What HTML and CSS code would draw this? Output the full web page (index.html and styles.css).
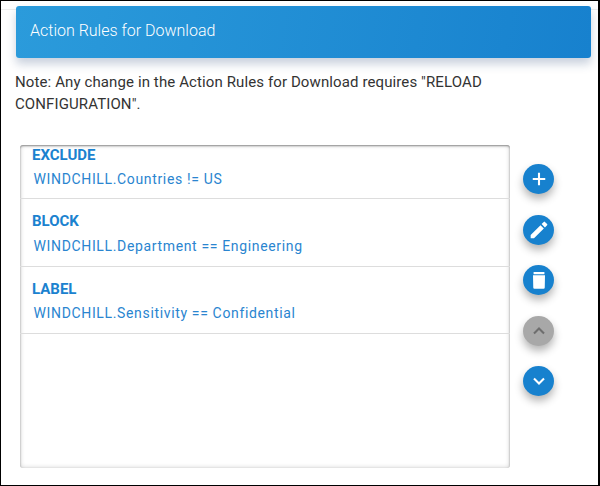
FILE: index.html
```html
<!DOCTYPE html>
<html lang="en">
<head>
  <meta charset="UTF-8">
  <title>Action Rules for Download</title>
  <link rel="stylesheet" href="styles.css">
</head>
<body>

<div class="frame">
  <div class="page-header">Action Rules for Download</div>
  <p class="note">Note: Any change in the Action Rules for Download requires "RELOAD CONFIGURATION".</p>

  <div class="rules-area">
    <div class="rule-list">
      <div class="rule rule-first">
        <div class="rule-type">EXCLUDE</div>
        <div class="rule-text">WINDCHILL.Countries != US</div>
      </div>
      <div class="rule rule-second">
        <div class="rule-type">BLOCK</div>
        <div class="rule-text">WINDCHILL.Department == Engineering</div>
      </div>
      <div class="rule">
        <div class="rule-type">LABEL</div>
        <div class="rule-text">WINDCHILL.Sensitivity == Confidential</div>
      </div>
    </div>

    <div class="actions">
      <button class="fab" aria-label="Add">
        <svg viewBox="0 0 24 24"><path d="M12 4.500v15M4.500 12h15" class="stroke"/></svg>
      </button>
      <button class="fab" aria-label="Edit">
        <svg viewBox="0 0 24 24"><path d="M2 18v4h4L17.810 10.200l-4-4L2 18zM21.700 6.300a1 1 0 0 0 0-1.410l-2.590-2.590a1 1 0 0 0-1.410 0l-2.580 2.580 4 4 2.580-2.580z"/></svg>
      </button>
      <button class="fab" aria-label="Delete">
        <svg viewBox="0 0 24 24"><path d="M4.800 6.200h14.400l-.3 14.800a1.500 1.500 0 0 1-1.500 1.500H6.600a1.500 1.500 0 0 1-1.500-1.500L4.800 6.200zM5.500 2.500h13V5h-13z"/></svg>
      </button>
      <button class="fab fab-disabled" aria-label="Move up">
        <svg viewBox="0 0 24 24"><path d="M6 15l6-6 6 6" class="stroke"/></svg>
      </button>
      <button class="fab" aria-label="Move down">
        <svg viewBox="0 0 24 24"><path d="M6 9l6 6 6-6" class="stroke"/></svg>
      </button>
    </div>
  </div>
</div>

</body>
</html>
```

FILE: styles.css
```css
body {
  margin: 0;
  padding: 0;
  font-family: Roboto, Arial, sans-serif;
  background: #fff;
}

.frame {
  box-sizing: border-box;
  width: 600px;
  height: 486px;
  border: 1px solid #000;
  border-right-width: 2px;
  padding: 5px 7px 0 15px;
  overflow: hidden;
  background: linear-gradient(#eee, #eee) no-repeat 0 8px / 100% 1px;
}

/* Header */
.page-header {
  height: 52px;
  padding-left: 14px;
  line-height: 50px;
  font-size: 16px;
  font-weight: 300;
  color: #fff;
  background: linear-gradient(100deg, #2b9bdb, #1781ce);
  border-radius: 3px;
  box-shadow: 0 6px 10px rgba(40, 70, 120, 0.25);
}

.note {
  margin: 13px 0 0 -1px;
  font-size: 15px;
  line-height: 22px;
  letter-spacing: 0.11px;
  color: #333;
}

/* Rule list */
.rules-area {
  display: flex;
  margin: 30px 0 0 4px;
}

.rule-list {
  box-sizing: border-box;
  width: 490px;
  height: 323px;
  background: #fff;
  border-radius: 3px;
  box-shadow: inset 0 1px 2px rgba(0, 0, 0, 0.4), inset 0 0 5px rgba(0, 0, 0, 0.2);
}

.rule {
  box-sizing: border-box;
  height: 67px;
  padding: 14px 12px 0;
  border-bottom: 1px solid #ddd;
}

.rule-first {
  height: 54px;
  padding-top: 2px;
}

.rule-second {
  height: 68px;
}

.rule-type {
  font-size: 15px;
  line-height: 16px;
  font-weight: 700;
  color: #1b82cf;
}

.rule-text {
  margin: 8px 0 0 1.500px;
  font-size: 14px;
  line-height: 16px;
  letter-spacing: 0.65px;
  color: #2a85d0;
}

.rule-second .rule-text {
  margin-top: 9px;
}

/* Action buttons */
.actions {
  display: flex;
  flex-direction: column;
  gap: 20.500px;
  padding: 19px 0 0 13px;
}

.fab {
  display: flex;
  align-items: center;
  justify-content: center;
  width: 31px;
  height: 30px;
  padding: 0;
  border: none;
  border-radius: 50%;
  background: #1781ce;
  box-shadow: 0 5px 9px rgba(0, 0, 0, 0.3);
}

.fab svg {
  width: 20px;
  height: 20px;
  fill: #fff;
}

.fab .stroke {
  fill: none;
  stroke: #fff;
  stroke-width: 2.500;
}

.fab-disabled {
  background: #a8a8a8;
}

.fab-disabled .stroke {
  stroke: #6e6e6e;
}
```
